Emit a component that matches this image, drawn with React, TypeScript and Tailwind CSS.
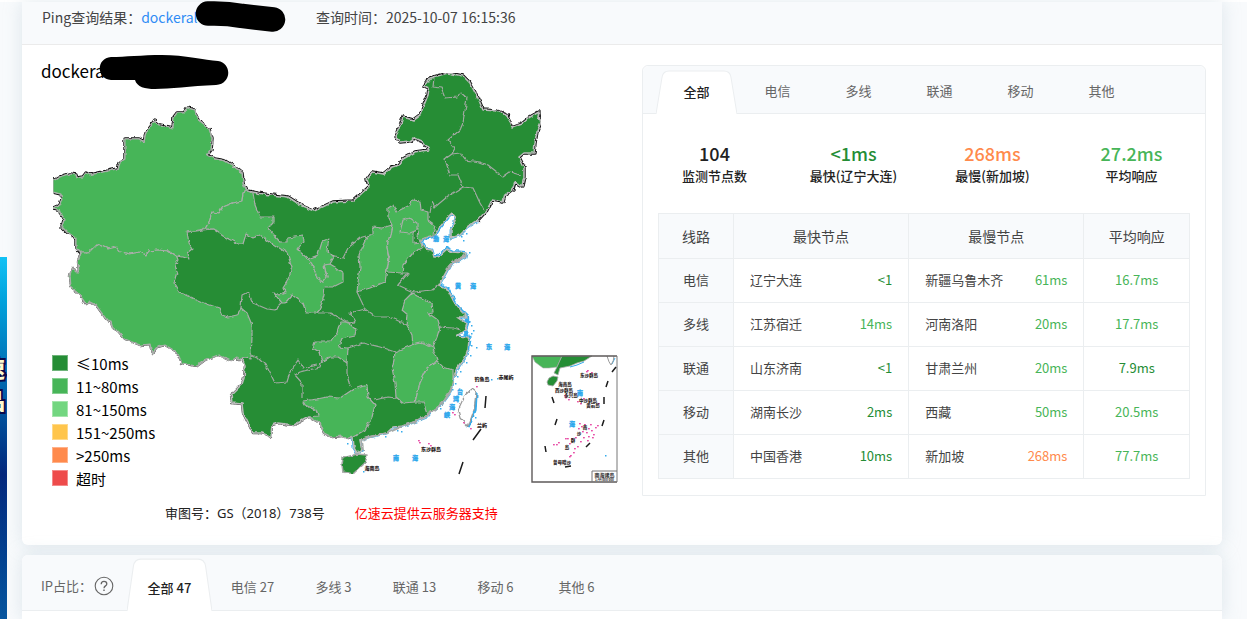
import React, { useState } from 'react';
import { clsx } from 'clsx';

const legend = [
  { label: '≤10ms', color: 'bg-[#258d35] border-[#6fb47a]' },
  { label: '11~80ms', color: 'bg-[#47b558] border-[#86cf91]' },
  { label: '81~150ms', color: 'bg-[#72d680] border-[#a3e5ac]' },
  { label: '151~250ms', color: 'bg-[#ffc54c] border-[#ffd98a]' },
  { label: '>250ms', color: 'bg-[#ff8a4c] border-[#ffb28a]' },
  { label: '超时', color: 'bg-[#ee4b4b] border-[#f48a8a]' },
];

const lines = ['全部', '电信', '多线', '联通', '移动', '其他'];

const stats = [
  { value: '104', label: '监测节点数', color: 'text-[#222]' },
  { value: '<1ms', label: '最快(辽宁大连)', color: 'text-[#258d35]' },
  { value: '268ms', label: '最慢(新加坡)', color: 'text-[#ff8a4c]' },
  { value: '27.2ms', label: '平均响应', color: 'text-[#47b558]' },
];

const rows = [
  { line: '电信', fast: '辽宁大连', fastMs: '<1', slow: '新疆乌鲁木齐', slowMs: '61ms', avg: '16.7ms' },
  { line: '多线', fast: '江苏宿迁', fastMs: '14ms', slow: '河南洛阳', slowMs: '20ms', avg: '17.7ms' },
  { line: '联通', fast: '山东济南', fastMs: '<1', slow: '甘肃兰州', slowMs: '20ms', avg: '7.9ms' },
  { line: '移动', fast: '湖南长沙', fastMs: '2ms', slow: '西藏', slowMs: '50ms', avg: '20.5ms' },
  { line: '其他', fast: '中国香港', fastMs: '10ms', slow: '新加坡', slowMs: '268ms', avg: '77.7ms' },
];

const ipTabs = [
  { name: '全部', count: 47 },
  { name: '电信', count: 27 },
  { name: '多线', count: 3 },
  { name: '联通', count: 13 },
  { name: '移动', count: 6 },
  { name: '其他', count: 6 },
];

const getDelayColor = (value: string) => {
  const ms = parseFloat(value.replace('<', ''));
  if (ms <= 10) return 'text-[#258d35]';
  if (ms <= 80) return 'text-[#47b558]';
  return 'text-[#ff8a4c]';
};

// land border, clockwise from the western tip
const landBorder =
  '81,253 76,248 76,238 67,232 62,227 64,220 61,215 59,209 53,208 60,205 62,199 61,194 53,192 53,181 60,177 70,174 76,175 77,178 83,177 86,173 90,175 117,169 119,163 125,159 125,139 139,139 144,142 146,133 155,121 160,125 173,128 174,117 177,113 184,113 187,108 195,110 196,116 201,123 209,129 212,138 211,150 207,155 214,159 225,161 233,166 242,173 243,183 247,191 263,194 288,197 302,206 314,211 333,202 353,201 369,187 367,179 372,172 383,174 392,167 399,165 403,159 415,152 429,150 423,142 414,138 410,141 400,142 396,137 403,117 413,120 421,114 422,110 428,95 429,88 424,86 430,78 448,73 463,76 470,83 478,98 483,110 497,111 507,115 512,127 523,123 530,117 539,112 538,117 541,122 537,132 535,143 534,153 524,153 519,157 524,167 524,177 522,186 515,182 513,189 505,195 503,202 492,200 487,210 477,221';
const coast =
  '477,221 468,227 460,235 451,238 451,230 456,218 452,213 448,217 440,227 434,236 423,238 421,242 425,249 432,250 434,257 438,257 447,249 453,252 466,253 465,257 450,265 444,276 439,285 448,290 453,300 458,308 467,317 457,317 467,324 465,330 457,336 468,337 469,340 468,350 465,358 457,369 453,378 450,393 442,404 433,410 427,417 417,421 403,426 393,427 387,433 370,437 360,440 362,450 357,453 354,448 353,437';
const southBorder =
  '353,437 347,438 342,436 332,437 324,433 320,423 309,417 294,425 278,423 272,425 271,437 262,433 253,433 248,423 243,413 242,404 232,403 231,395 242,384 244,378 245,365 242,358 239,360 237,357 231,361 218,355 205,360 197,366 182,363 177,352 165,345 157,347 152,353 150,344 140,345 125,339 118,331 113,328 111,321 107,320 96,305 90,302 86,304 78,292 71,287 70,275 72,268 76,272 79,272 78,262 81,253';

const lightProvinces = [
  // Xinjiang
  '81,253 76,248 76,238 67,232 62,227 64,220 61,215 59,209 53,208 60,205 62,199 61,194 53,192 53,181 60,177 70,174 76,175 77,178 83,177 86,173 90,175 117,169 119,163 125,159 125,139 139,139 144,142 146,133 155,121 160,125 173,128 174,117 177,113 184,113 187,108 195,110 196,116 201,123 209,129 212,138 211,150 207,155 214,159 225,161 233,166 242,173 243,183 247,191 243,193 242,201 233,203 223,207 219,213 212,212 209,222 205,229 187,232 189,243 193,249 188,253 189,259 183,257 176,256 168,251 158,250 148,251 146,255 140,252 130,254 120,252 116,247 108,249 97,244 88,253',
  // Tibet
  '81,253 88,253 97,244 108,249 116,247 120,252 130,254 140,252 146,255 148,251 158,250 168,251 177,257 178,260 175,265 177,272 174,282 180,292 193,298 207,304 219,308 222,315 228,317 237,315 241,308 247,313 252,325 252,337 251,358 244,357 239,360 237,357 231,361 218,355 205,360 197,366 182,363 177,352 165,345 157,347 152,353 150,344 140,345 125,339 118,331 113,328 111,321 107,320 96,305 90,302 86,304 78,292 71,287 70,275 72,268 76,272 79,272 78,262',
  // Gansu
  '247,191 253,193 255,205 260,217 273,217 273,223 268,228 280,242 287,242 287,238 303,236 304,242 298,250 308,259 314,268 317,277 323,282 327,277 324,265 330,264 335,267 343,273 343,282 333,287 325,287 324,295 322,303 317,313 307,313 303,303 292,295 285,303 282,303 273,292 280,295 285,293 283,288 288,280 292,267 287,253 270,242 260,235 253,238 246,234 243,244 238,244 223,236 213,229 205,229 209,222 212,212 219,213 223,207 233,203 242,201 243,193',
  // Ningxia
  '308,259 318,255 322,242 329,239 327,250 334,257 330,264 324,265 327,277 323,282 317,278 314,268',
  // Shanxi
  '363,245 367,237 373,235 373,227 382,228 392,225 390,235 387,247 389,258 387,270 385,282 370,288 357,292 358,282 360,267 359,255',
  // Hebei
  '392,225 388,217 388,208 393,205 396,212 410,205 413,200 420,201 421,210 428,212 428,220 435,225 433,235 423,238 421,242 422,248 413,253 403,265 402,273 387,272 389,258 387,247 390,235',
  // Beijing
  '400,232 403,220 410,218 417,223 417,230 410,233',
  // Anhui
  '412,293 417,296 432,303 433,312 428,313 438,320 440,327 437,337 433,347 423,343 413,345 412,335 407,325 408,315 402,310 405,300',
  // Chongqing
  '340,322 348,322 356,330 355,335 342,338 339,347 348,348 347,363 338,357 330,357 322,362 319,352 313,348 315,342 330,342 337,332',
  // Jiangxi
  '395,352 412,345 420,343 433,348 437,360 427,368 420,383 415,402 403,403 396,397 395,383 392,368 394,360',
  // Fujian
  '437,361 443,367 453,370 453,378 450,393 442,404 433,410 427,414 423,402 415,402 420,383 427,368',
  // Guangxi
  '303,401 317,399 327,397 340,398 352,390 367,385 368,397 375,405 372,417 365,430 353,437 347,438 342,436 332,437 324,433 320,423 309,417 318,416 316,410 305,405',
];

const innerBorders = [
  '434,78 433,87 441,88 445,98 458,97 460,92 467,98 463,123 460,130 448,140 455,148 452,154',
  '452,154 460,153 465,160 480,162 488,165 497,172 503,177 510,172 520,175',
  '452,154 445,159 450,175 458,175 463,187 473,188 480,203 484,210',
  '463,187 447,197 435,207 432,202 430,213',
  '334,257 343,258 348,248 360,238 367,236',
  '317,313 330,313 348,323 355,322 350,313 365,309 357,292',
  '365,309 375,317 390,317 407,325',
  '402,273 408,273 398,285 413,292 432,290 439,285',
  '438,327 453,328 460,330',
  '348,348 363,343 380,347 395,352',
  '347,363 347,373 350,387',
  '322,360 320,367 300,372 295,375 302,383 302,398',
  '252,355 258,358 267,367 275,383 287,382 290,372 298,360 303,368 317,365',
  '375,400 387,397 397,398',
  '241,308 242,295 248,292 253,303 267,309 275,310 282,303',
  '187,232 213,229',
];

const seaLabels: [string, number, number][] = [
  ['渤', 436, 241],
  ['海', 446, 241],
  ['黄', 458, 288],
  ['海', 473, 288],
  ['东', 489, 349],
  ['海', 507, 349],
  ['南', 396, 460],
  ['海', 415, 460],
  ['台', 460, 394],
  ['湾', 456, 401],
  ['海', 452, 409],
  ['峡', 447, 417],
  ['南', 580, 395],
  ['海', 572, 426],
];

const islandLabels: [string, number, number][] = [
  ['钓鱼岛', 482, 381],
  ['赤尾屿', 506, 379],
  ['兰屿', 482, 427],
  ['东沙群岛', 431, 451],
  ['海南岛', 372, 470],
  ['东沙群岛', 589, 377],
  ['海南岛', 565, 386],
  ['西沙群岛', 564, 392],
  ['永兴岛', 571, 397],
  ['中沙群岛', 588, 402],
  ['黄岩岛', 593, 407],
  ['南', 585, 429],
  ['沙', 579, 435],
  ['群', 573, 442],
  ['岛', 567, 449],
  ['曾母暗沙', 562, 464],
];

const dashes = [
  'M486 396L485 408M481 429L473 440M463 462L459 474',
  'M616 367L612 372M608 381L606 387M604 397V404M604 420L602 426M590 443L586 447M565 467L571 466M545 446L546 452M557 419L555 425M552 397L554 403',
];

const reefs = [
  [476, 386], [470, 428], [463, 422], [453, 408], [452, 412], [454, 414], [418, 440], [419, 442], [428, 443], [430, 445],
  [587, 370], [591, 372], [586, 371], [565, 397], [568, 399], [564, 395], [577, 401], [580, 403], [583, 398], [598, 403],
  [579, 423], [581, 426], [578, 428], [584, 424], [588, 428], [590, 424], [591, 430], [595, 427], [597, 425], [586, 432],
  [588, 436], [593, 434], [592, 437], [583, 437], [580, 441], [575, 437], [571, 438], [567, 438], [569, 443], [577, 446],
  [574, 448], [573, 452], [569, 456], [570, 455], [565, 438], [558, 442], [556, 444], [553, 444], [587, 440], [582, 431],
];

const coastDots = [
  [471, 333], [473, 330], [471, 345], [476, 347], [470, 355], [466, 362], [460, 371], [457, 376], [455, 383], [452, 389],
  [461, 236], [466, 233], [463, 240], [469, 252], [446, 246], [440, 408], [397, 430], [401, 431], [385, 436], [347, 443],
  [475, 417], [471, 325], [469, 321], [363, 471], [491, 379], [497, 378], [605, 455],
];

const ChinaMap: React.FC = () => (
  <svg viewBox="41 65 580 430" className="block w-[580px] max-w-full h-auto" role="img" aria-label="中国地图">
    <defs>
      <filter id="rough" x="0" y="0" width="100%" height="100%">
        <feTurbulence type="fractalNoise" baseFrequency="0.18" numOctaves="2" seed="4" result="noise" />
        <feDisplacementMap in="SourceGraphic" in2="noise" scale="4" xChannelSelector="R" yChannelSelector="G" />
      </filter>
    </defs>

    <g filter="url(#rough)" strokeLinejoin="round" fill="none">
      <polyline points={landBorder} stroke="#111" strokeWidth="3.4" />
      <polyline points={southBorder} stroke="#444" strokeWidth="2.4" />
      <polyline points={coast} stroke="#35acec" strokeWidth="2.8" />
      <polyline
        points="439,285 448,290 453,300 458,308 467,317 467,324 465,330 468,337 469,340 468,350"
        stroke="#35acec"
        strokeWidth="4.4"
      />
      <polyline points="448,217 440,227 434,236 423,238 421,242 425,249" stroke="#35acec" strokeWidth="4" />
      <polyline points="434,257 438,257 447,249 453,252 466,253" stroke="#35acec" strokeWidth="4" />
      <polygon
        points={`${landBorder} ${coast} ${southBorder}`}
        fill="#258d35"
        stroke="#bcbcbc"
        strokeWidth="1.6"
      />
      {lightProvinces.map((points) => (
        <polygon key={points} points={points} fill="#47b558" stroke="#aaaeaa" strokeWidth="1.2" />
      ))}
      {innerBorders.map((points) => (
        <polyline key={points} points={points} stroke="#a3a9a3" strokeWidth="1.2" />
      ))}
      {/* Tianjin */}
      <polygon points="413,233 418,229 417,236 421,243 413,244" fill="#258d35" stroke="#aaaeaa" />
      <polyline points="466,255 452,263 446,270" stroke="#aaa" strokeWidth="2.5" />
      <polyline points="452,388 443,403 432,412 417,421 403,426 387,433 370,437 362,440 363,450" stroke="#a5aaa8" strokeWidth="2" />
      {/* Hainan, Taiwan */}
      <polygon points="342,465 343,458 357,454 367,455 365,463 353,474 343,472" fill="#258d35" stroke="#aaa" strokeWidth="1.5" />
      <polyline points="476,392 475,410 468,428" stroke="#35acec" strokeWidth="3.4" />
      <polygon points="472,389 476,392 474,410 468,427 460,418 458,410 465,395" fill="#fff" stroke="#999" strokeWidth="1.2" />
    </g>

    {/* South China Sea inset */}
    <path d="M532 356H562L557 367L549 368L543 368L535 362Z" fill="#47b558" stroke="#aaa" strokeWidth="0.6" />
    <path d="M562 356H592L584 361L577 363L570 366L560 368L558 375L554 373L557 367Z" fill="#258d35" stroke="#aaa" strokeWidth="0.8" />
    <path d="M547 382L549 378L553 376L558 377L557 381L553 386L548 385Z" fill="#258d35" stroke="#aaa" strokeWidth="0.8" />
    <path d="M584 362L577 365L570 367M612 364L615 358" stroke="#35acec" fill="none" />
    <path d="M607 356Q609 363 611 365Q614 361 614 356" stroke="#999" fill="none" />
    <path d="M617 356H532V482H617" stroke="#5e5a5a" strokeWidth="1.4" fill="none" />
    <path d="M617 356V482M592 482V471H617" stroke="#777" strokeWidth="1" fill="none" />

    <g stroke="#1b1b1b" strokeWidth="1.5" fill="none">
      {dashes.map((d) => (
        <path key={d} d={d} />
      ))}
    </g>
    {reefs.map(([x, y], i) => (
      <rect key={i} x={x} y={y} width="1.8" height="1.4" fill="#e850a8" />
    ))}
    {coastDots.map(([x, y], i) => (
      <rect key={i} x={x} y={y} width="1.5" height="1.5" fill="#35acec" />
    ))}

    <g textAnchor="middle" fontWeight="900">
      {seaLabels.map(([text, x, y]) => (
        <text key={`${text}${x}`} x={x} y={y} fontSize="6" fill="#2ba7ec" stroke="#2ba7ec" strokeWidth="0.3">
          {text}
        </text>
      ))}
      {islandLabels.map(([text, x, y]) => (
        <text key={`${text}${x}`} x={x} y={y} fontSize={x > 540 ? 4.5 : 5} fill="#2a2222">
          {text}
        </text>
      ))}
      <text x="604.5" y="477" fontSize="5" fill="#444">南海诸岛</text>
      <text x="604.5" y="481" fontSize="3" fill="#444">1:44 000 000</text>
    </g>
  </svg>
);

const TabShape: React.FC = () => (
  <svg
    viewBox="0 0 80 44"
    preserveAspectRatio="none"
    className="absolute inset-x-0 -bottom-px w-full h-full"
    aria-hidden="true"
  >
    <path d="M0 44L6 7Q7 1 13 1H67Q73 1 74 7L80 44Z" fill="#fff" />
    <path d="M0 44L6 7Q7 1 13 1H67Q73 1 74 7L80 44" fill="none" stroke="#ebeef0" />
  </svg>
);

const MapPanel: React.FC = () => (
  <div className="pt-5">
    <div className="relative">
      <ChinaMap />
      <h2 className="absolute left-0 -top-2 text-[17px] leading-7 text-black">dockera</h2>
      <svg className="absolute left-14 -top-3 w-36 h-10" viewBox="97 53 144 40" aria-hidden="true">
        <path d="M111 57C125 57 142 55 162 55C185 55 205 60 218 61C232 63 232 84 216 85C190 86 170 89 155 89C145 89 137 87 135 80H111C96 79 96 58 111 57Z" />
      </svg>
      <ul className="absolute left-[11px] top-[287px] text-[15px] text-black">
        {legend.map((item) => (
          <li key={item.label} className="flex items-center gap-2 h-[23px] leading-6">
            <span className={clsx('size-4 border mb-0.5', item.color)} />
            {item.label}
          </li>
        ))}
      </ul>
    </div>
    <div className="flex gap-[30px] pl-[124px] mt-2 text-[13px] leading-5">
      <span className="text-[#222] font-['Noto_Sans','Noto_Sans_CJK_SC',sans-serif]">审图号：GS（2018）738号</span>
      <a href="#" className="text-[#f00]">亿速云提供云服务器支持</a>
    </div>
  </div>
);

const ResultPanel: React.FC = () => {
  const [active, setActive] = useState('全部');

  return (
    <div className="mt-5 self-start border border-[#ebeef0] rounded-t-md">
      <div className="flex pl-[13px] pt-[3px] bg-[#f8fafc] border-b border-[#ebeef0] rounded-t-md">
        {lines.map((name) => (
          <button
            key={name}
            onClick={() => setActive(name)}
            className={clsx(
              'relative w-[81px] h-11 text-[13px]',
              name === active ? 'text-[#222] font-medium pt-0.5' : 'text-[#666]'
            )}
          >
            {name === active && <TabShape />}
            <span className="relative">{name}</span>
          </button>
        ))}
      </div>

      <div className="grid grid-cols-4 pl-0.5 pr-1 pt-[27px] text-center font-medium">
        {stats.map((item) => (
          <div key={item.label}>
            <div className={clsx('text-lg leading-6', item.color)}>{item.value}</div>
            <div className="pt-px text-[13px] leading-5 text-[#222]">{item.label}</div>
          </div>
        ))}
      </div>

      <div className="px-[15px] pt-[27px] pb-4">
        <table className="w-full table-fixed border-collapse text-[13px] text-[#444] [&_td]:border [&_td]:border-[#ebeef0] [&_th]:border [&_th]:border-[#ebeef0] [&_th]:font-normal">
          <colgroup>
            <col className="w-[75px]" />
            <col className="w-[33%]" />
            <col className="w-[33%]" />
            <col />
          </colgroup>
          <thead>
            <tr className="h-[45px] bg-[#f8fafc] text-sm">
              <th>线路</th>
              <th>最快节点</th>
              <th>最慢节点</th>
              <th>平均响应</th>
            </tr>
          </thead>
          <tbody>
            {rows.map((row) => (
              <tr key={row.line} className="h-11">
                <th className="pb-0.5 bg-[#f8fafc]">{row.line}</th>
                <td className="px-4 pb-0.5">
                  <div className="flex justify-between">
                    <span>{row.fast}</span>
                    <span className={getDelayColor(row.fastMs)}>{row.fastMs}</span>
                  </div>
                </td>
                <td className="px-4 pb-0.5">
                  <div className="flex justify-between">
                    <span>{row.slow}</span>
                    <span className={getDelayColor(row.slowMs)}>{row.slowMs}</span>
                  </div>
                </td>
                <td className={clsx('pb-0.5 text-center', getDelayColor(row.avg))}>{row.avg}</td>
              </tr>
            ))}
          </tbody>
        </table>
      </div>
    </div>
  );
};

const IpShare: React.FC = () => {
  const [active, setActive] = useState('全部');

  return (
    <section className="relative flex-1 bg-white rounded-t-md shadow-[0_0_18px_rgba(180,200,212,0.4)]">
      <div className="flex pl-[19px] pt-0.5 bg-[#f8fafc] border-b border-[#ebeef0] rounded-t-md text-[13px] text-[#666]">
        <div className="flex items-center w-[86px] pt-1">
          <span className="w-[53px] whitespace-nowrap">IP占比：</span>
          <button aria-label="说明">
            <svg viewBox="0 0 20 20" className="size-5" fill="none" stroke="#666">
              <circle cx="10" cy="10" r="8.8" strokeWidth="1.1" />
              <path d="M7.2 8.2C7.2 6.3 8.4 5.3 10 5.3S12.8 6.4 12.8 7.9C12.8 9.9 10 9.9 10 12.2" strokeWidth="1.3" />
              <path d="M10 13.6V15" strokeWidth="1.4" />
            </svg>
          </button>
        </div>
        <div className="flex">
          {ipTabs.map(({ name, count }) => (
            <button
              key={name}
              onClick={() => setActive(name)}
              className={clsx(
                'relative h-[53px]',
                name === active ? 'w-[85px] text-[#222] font-medium pt-2' : 'w-[81px] pt-1.5'
              )}
            >
              {name === active && <TabShape />}
              <span className="relative">
                {name} {count}
              </span>
            </button>
          ))}
        </div>
      </div>
    </section>
  );
};

const SideBanner: React.FC = () => (
  <aside className="absolute left-0 top-[255px] bottom-0 w-[7px] overflow-hidden bg-linear-to-b from-[#12c2f5] via-[#04277c] via-60% to-[#06559f]">
    <div className="absolute right-0.5 top-[94px] text-[22px] leading-8 font-black text-[#fffbd0] [-webkit-text-stroke:4px_#0a0a4a] [paint-order:stroke]">
      <div>速</div>
      <div>品</div>
    </div>
  </aside>
);

const App: React.FC = () => {
  return (
    <div className="relative flex flex-col gap-2.5 min-h-screen pl-[22px] pr-[25px] bg-[#f8fafc] border-t-2 border-white font-['Noto_Sans_CJK_SC',sans-serif]">
      <SideBanner />

      <section className="relative bg-white rounded-b-md shadow-[0_0_18px_rgba(180,200,212,0.4)]">
        <header className="relative flex gap-[30px] pl-5 pt-1 pb-4 bg-[#f8fafc] border-b border-[#ebebeb] text-sm leading-[22px] text-[#444]">
          <div className="w-[244px]">
            Ping查询结果：
            <a href="#" className="text-[#2f8cf5]">dockeral</a>
          </div>
          <div>查询时间：2025-10-07 16:15:36</div>
          <svg className="absolute left-[170px] top-[-2px] w-24 h-9" viewBox="192 0 96 36" aria-hidden="true">
            <path d="M208 13.5C222 13 232 14 242 16L273 19.5" fill="none" stroke="#000" strokeWidth="24.5" strokeLinecap="round" />
          </svg>
        </header>

        <div className="grid grid-cols-[601fr_564fr] pl-[19px] pr-4 pb-[22px]">
          <MapPanel />
          <ResultPanel />
        </div>
      </section>

      <IpShare />
    </div>
  );
};

export default App;
